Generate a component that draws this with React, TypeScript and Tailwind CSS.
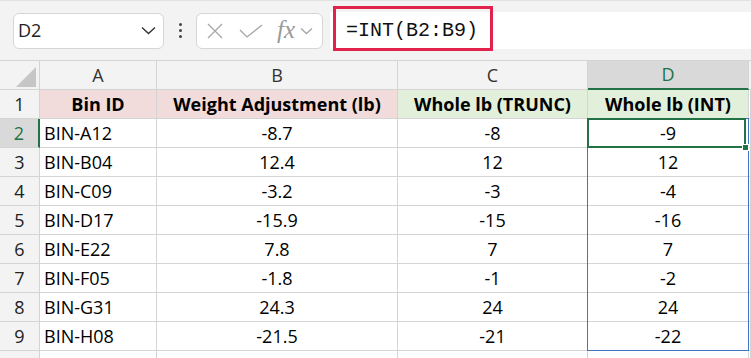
import React from 'react';

const rows = [
    { id: 'BIN-A12', w: '-8.7', t: '-8', i: '-9' },
    { id: 'BIN-B04', w: '12.4', t: '12', i: '12' },
    { id: 'BIN-C09', w: '-3.2', t: '-3', i: '-4' },
    { id: 'BIN-D17', w: '-15.9', t: '-15', i: '-16' },
    { id: 'BIN-E22', w: '7.8', t: '7', i: '7' },
    { id: 'BIN-F05', w: '-1.8', t: '-1', i: '-2' },
    { id: 'BIN-G31', w: '24.3', t: '24', i: '24' },
    { id: 'BIN-H08', w: '-21.5', t: '-21', i: '-22' },
];

const cell = 'h-[29px] border-r border-b border-[#d4d4d4] flex items-center';

function Toolbar() {
    return (
        <div className="h-[60px] flex items-center border-t border-[#e2e2e2]">
            <div className="ml-[13px] w-[151px] h-[36px] bg-white border border-[#d6d6d6] rounded-[6px] flex items-center justify-between pl-[4px] pr-[7px]">
                <span className="text-[18px] text-[#222]">D2</span>
                <svg width="15" height="9" viewBox="0 0 15 9" fill="none">
                    <path d="M1 1.5 L7.5 7.5 L14 1.5" stroke="#333" strokeWidth="1.4" />
                </svg>
            </div>
            <div className="w-[32px] flex flex-col items-center gap-[3px]">
                <span className="w-[3px] h-[3px] rounded-full bg-[#444]" />
                <span className="w-[3px] h-[3px] rounded-full bg-[#444]" />
                <span className="w-[3px] h-[3px] rounded-full bg-[#444]" />
            </div>
            <div className="w-[127px] h-[36px] bg-white border border-[#d6d6d6] rounded-[6px] flex items-center pl-[10px]">
                <svg width="16" height="16" viewBox="0 0 16 16" fill="none">
                    <path d="M1 1 L15 15 M15 1 L1 15" stroke="#a6a6a6" strokeWidth="1.3" />
                </svg>
                <svg className="ml-[16px]" width="24" height="14" viewBox="0 0 24 14" fill="none">
                    <path d="M1 6 L8 13 L23 1" stroke="#a6a6a6" strokeWidth="1.3" />
                </svg>
                <span className="ml-[14px] text-[25px] italic text-[#9a9a9a] leading-none pb-[2px]" style={{ fontFamily: '"Liberation Serif", serif' }}>fx</span>
                <svg className="ml-[5px]" width="13" height="8" viewBox="0 0 13 8" fill="none">
                    <path d="M1 1.5 L6.5 6.5 L12 1.5" stroke="#a6a6a6" strokeWidth="1.3" />
                </svg>
            </div>
            <div className="ml-[7px] flex-1 h-[37px] bg-white relative flex items-center">
                <span className="ml-[16px] text-[20px] text-[#111]" style={{ fontFamily: '"Liberation Mono", monospace' }}>=INT(B2:B9)</span>
                <div className="absolute left-[3px] top-[-6px] w-[160px] h-[45px] border-[3px] border-[#e0224c]" />
            </div>
        </div>
    );
}

export default function App() {
    return (
        <div className="w-[751px] h-[358px] overflow-hidden bg-[#f3f3f3]" style={{ fontFamily: '"Open Sans", sans-serif' }}>
            <Toolbar />
            <div className="grid grid-cols-[40px_117px_241px_190px_161px_1fr] bg-white text-[18px] text-black">
                <div className="h-[30px] bg-[#f3f3f3] border-r border-b border-[#d4d4d4] border-t relative">
                    <svg className="absolute left-[16px] top-[6px]" width="20" height="20" viewBox="0 0 20 20">
                        <path d="M20 0 L20 20 L0 20 Z" fill="#c6c6c6" />
                    </svg>
                </div>
                {['A', 'B', 'C'].map((c) => (
                    <div key={c} className="h-[30px] bg-[#f3f3f3] border-r border-b border-t border-[#d4d4d4] flex items-center justify-center text-[#333]">{c}</div>
                ))}
                <div className="h-[30px] bg-[#d9d9d9] border-r border-t border-[#d4d4d4] border-b-2 border-b-[#217346] flex items-center justify-center text-[#217346]">D</div>
                <div className="h-[30px] bg-[#f3f3f3] border-b border-t border-[#d4d4d4]" />

                <div className={`${cell} justify-center bg-[#f3f3f3] text-[#222]`}>1</div>
                <div className={`${cell} justify-center bg-[#f2dcdb] font-bold`}>Bin ID</div>
                <div className={`${cell} justify-center bg-[#f2dcdb] font-bold`}>Weight Adjustment (lb)</div>
                <div className={`${cell} justify-center bg-[#e2efda] font-bold`}>Whole lb (TRUNC)</div>
                <div className={`${cell} justify-center bg-[#e2efda] font-bold`}>Whole lb (INT)</div>
                <div className={cell} />

                {rows.map((r, n) => (
                    <React.Fragment key={r.id}>
                        <div className={`${cell} justify-center ${n === 0 ? 'bg-[#d9d9d9] text-[#217346] border-r-2 border-r-[#217346]' : 'bg-[#f3f3f3] text-[#222]'}`}>{n + 2}</div>
                        <div className={`${cell} pl-[4px]`}>{r.id}</div>
                        <div className={`${cell} justify-center`}>{r.w}</div>
                        <div className={`${cell} justify-center`}>{r.t}</div>
                        <div className={`${cell} justify-center ${n === 0 ? 'relative' : ''}`}>
                            {n === 0 && (
                                <>
                                    <div className="absolute z-10 left-[-1px] top-[-1px] w-[162px] h-[233px] border-[1.5px] border-[#4472c4] pointer-events-none" />
                                    <div className="absolute z-20 left-[-1px] top-[-1px] right-[2px] bottom-[-1px] border-2 border-[#217346]" />
                                    <div className="absolute z-30 right-[-1px] bottom-[-4px] w-[7px] h-[7px] bg-[#217346] border border-white" />
                                </>
                            )}
                            <span>{r.i}</span>
                        </div>
                        <div className={cell} />
                    </React.Fragment>
                ))}
                <div className={`${cell} bg-[#f3f3f3]`} />
                <div className={cell} />
                <div className={cell} />
                <div className={cell} />
                <div className={cell} />
                <div className={cell} />
            </div>
        </div>
    );
}
